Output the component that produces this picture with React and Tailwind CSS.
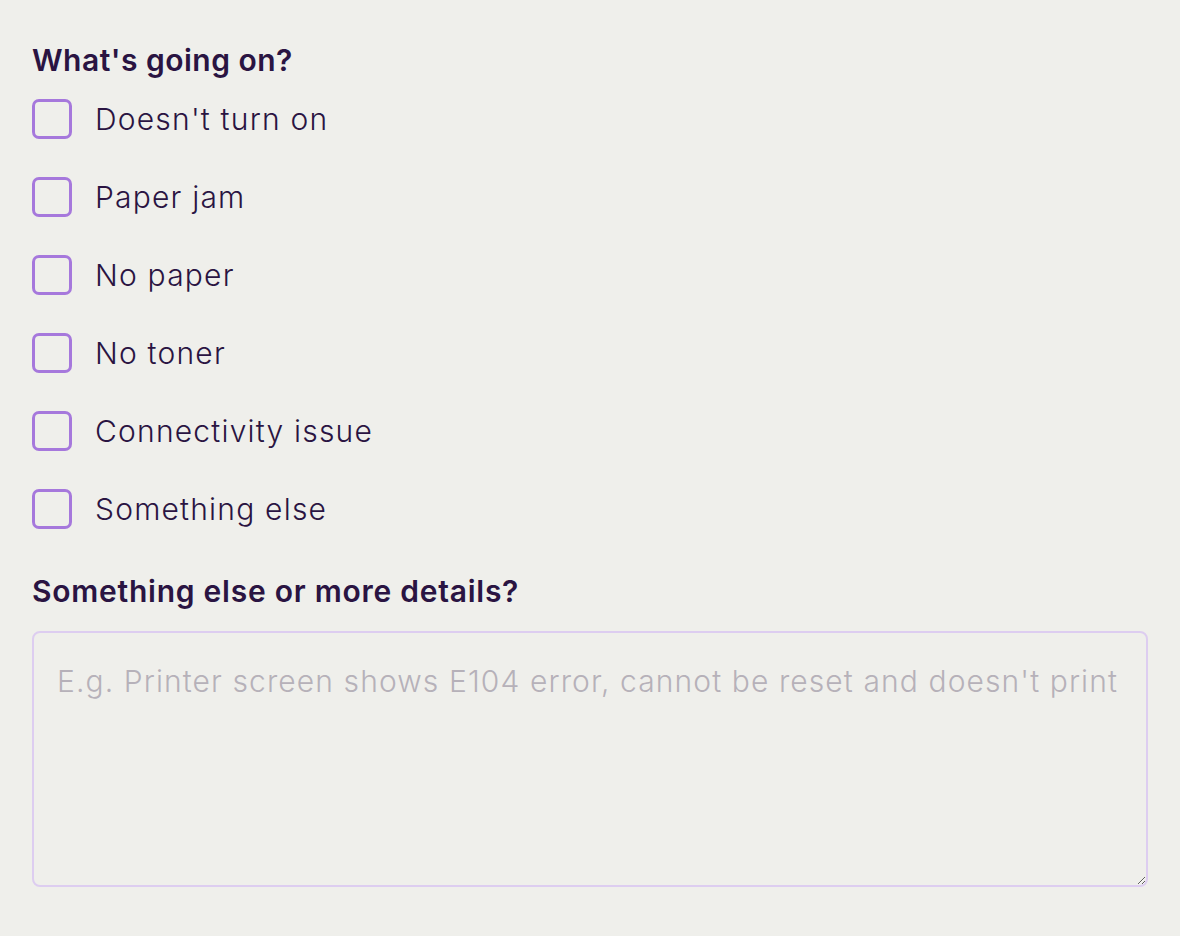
const OPTIONS = [
  "Doesn't turn on",
  "Paper jam",
  "No paper",
  "No toner",
  "Connectivity issue",
  "Something else",
];

export default function App() {
  return (
    <div className="min-h-[936px] bg-[#efefeb] px-[32px] pt-[40px] font-['Inter',sans-serif] text-[#2a1442]">
      <h2 className="text-[30px] font-semibold leading-[40px] tracking-[0.5px]">What's going on?</h2>

      <div className="mt-[19px] flex flex-col gap-[38px]">
        {OPTIONS.map((label) => (
          <label key={label} className="flex items-center gap-[23px]">
            <input
              type="checkbox"
              className="h-[40px] w-[40px] appearance-none rounded-[7px] border-[3px] border-[#a678dc] bg-transparent"
            />
            <span className="text-[30px] font-light leading-[40px] tracking-[1.2px]">{label}</span>
          </label>
        ))}
      </div>

      <h2 className="mt-[42px] text-[30px] font-semibold leading-[40px] tracking-[0.75px]">
        Something else or more details?
      </h2>

      <textarea
        className="mt-[20px] block h-[256px] w-[1116px] rounded-[8px] border-2 border-[#ddcdf0] bg-transparent px-[23px] py-[28px] text-[30px] font-light leading-[40px] tracking-[1.1px] outline-none placeholder:text-[#b6b1b9]"
        placeholder="E.g. Printer screen shows E104 error, cannot be reset and doesn't print"
      />
    </div>
  );
}
